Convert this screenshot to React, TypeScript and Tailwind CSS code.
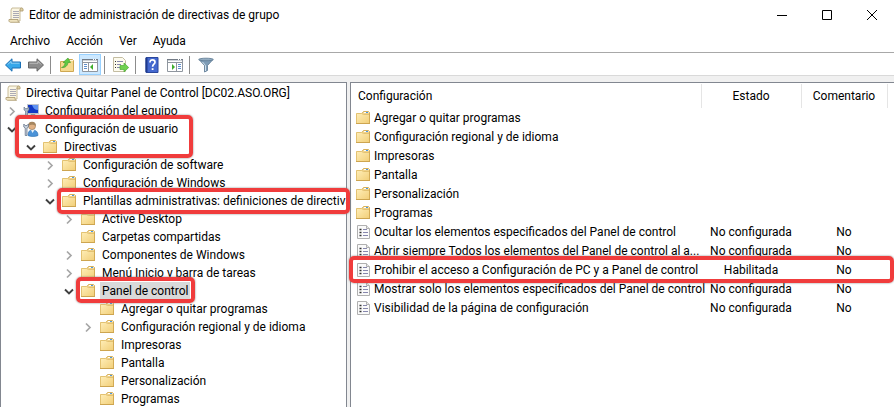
import { useState } from 'react'
import type { ReactNode } from 'react'

type IconProps = { className?: string }

function ScrollIcon({ className = '' }: IconProps) {
  return (
    <svg viewBox="0 0 16 16" className={`h-4 w-4 shrink-0 ${className}`}>
      <path d="M4 1h9.500L12 3v11H3V3z" fill="#fbf6e3" stroke="#c2b48f" strokeWidth=".9" />
      <path d="M12 3.500c0-2 1-2.700 2-2.500s1.300 1.500 1 3h-3z" fill="#e2d3a6" stroke="#a8956a" strokeWidth=".8" />
      <path d="M1 12.500h9c-.3 1.500.3 2.500 1.500 2.800H2.500C1 15 .7 14 1 12.500z" fill="#efe3bf" stroke="#a8956a" strokeWidth=".8" />
      <path d="M5 4.500h6M5 6.500h6M5 8.500h6M5 10.500h6" stroke="#a3a3b0" strokeWidth=".9" />
    </svg>
  )
}

function FolderIcon({ className = '' }: IconProps) {
  return (
    <svg viewBox="0 0 16 16" className={`h-4 w-4 shrink-0 ${className}`}>
      <defs>
        <linearGradient id="folder" x1="0" y1="0" x2="1" y2="1">
          <stop offset="0" stopColor="#ffefba" />
          <stop offset="1" stopColor="#f1cd75" />
        </linearGradient>
      </defs>
      <path d="M7.500 5V2.500l1-1h5l1 1V5z" fill="#f0d28a" stroke="#d6b15c" />
      <path d="M9 2.500h4.500" stroke="#fff" />
      <path d="M11 2.500h2" stroke="#4a98e4" />
      <path d="M1 3h6l1.500 1H15v10H1z" fill="url(#folder)" />
      <path d="M1.500 13V3.500h5.300L8.300 4.500H14" fill="none" stroke="#e3c272" />
      <path d="M14.500 3v11" stroke="#d3ab55" />
      <path d="M1 13.500h14" stroke="#cda550" />
    </svg>
  )
}

function ComputerIcon({ className = '' }: IconProps) {
  return (
    <svg viewBox="0 0 16 16" className={`h-4 w-4 shrink-0 ${className}`}>
      <path d="M4.500 1.500h11v9h-11z" fill="#1238c4" stroke="#c0c4cc" />
      <path d="M9 2h6v5c-3 0-5-2-6-5z" fill="#5f92f2" />
      <path d="M8 11h4l1 2H7z" fill="#9aa0aa" />
      <path d="M5 13.500h10" stroke="#c3c7cf" strokeWidth="1.500" />
      <path d="M1 4v3l1.500 1v6h2V8L6 7V4L4.500 5.500h-2z" fill="#a9b8ca" stroke="#5c6c82" strokeWidth=".6" />
    </svg>
  )
}

function UserIcon({ className = '' }: IconProps) {
  return (
    <svg viewBox="0 0 16 16" className={`h-4 w-4 shrink-0 ${className}`}>
      <path d="M5 14.500c0-4 1.500-5.500 4.500-5.500s5.500 1.500 5.500 5.500c-2 1.300-8 1.300-10 0z" fill="#4b93d8" stroke="#2a6bad" strokeWidth=".6" />
      <path d="M8 9l1.500 3L11.500 9z" fill="#e8f2fb" />
      <circle cx="9" cy="5" r="3.600" fill="#e0b184" stroke="#8d6a46" strokeWidth=".5" />
      <path d="M5.300 5C5 2 7 .6 9.200.8c2.500.1 4 1.700 3.500 4.200C11 4 8 3 5.300 5z" fill="#a58660" />
      <path d="M.8 3v3l1.400 1v7.500h1.800V7l1.400-1V3L4 4.500H2.200z" fill="#c7d0db" stroke="#5c6c82" strokeWidth=".7" />
    </svg>
  )
}

function PolicyIcon({ className = '' }: IconProps) {
  return (
    <svg viewBox="0 0 16 16" className={`h-4 w-4 shrink-0 ${className}`}>
      <path d="M2.500 1.500h9l3 3v10h-12z" fill="#fafafa" stroke="#b0b0b0" />
      <path d="M11.500 1.500v3h3" fill="#e6e6e6" stroke="#b0b0b0" />
      <path d="M4.500 5.500h2M4.500 8.500h2M4.500 11.500h2" stroke="#333" strokeWidth="1.600" />
      <path d="M8 5.500h4M8 8.500h5M8 11.500h5" stroke="#8787ad" />
    </svg>
  )
}

function ArrowIcon({ color, edge, flip }: { color: string; edge: string; flip?: boolean }) {
  return (
    <svg viewBox="0 0 16 16" className={`h-4 w-4 ${flip ? '-scale-x-100' : ''}`}>
      <path d="M.5 8L7 1.800V5h8.500v6H7v3.200z" fill={color} stroke={edge} strokeLinejoin="round" />
      <path d="M2.800 7.500L6 4.300V6.200h8.500" fill="none" stroke="#fff" strokeOpacity=".45" />
    </svg>
  )
}

function FolderUpIcon() {
  return (
    <svg viewBox="0 0 16 16" className="h-4 w-4">
      <path d="M1.500 4.500h6l1-2h5l1 1v11h-13z" fill="#f5d98f" stroke="#cfa852" />
      <path d="M10 3.500h4" stroke="#fff6d8" />
      <path d="M2.500 10.500C5 9.500 6 8 6 5.500H4L9 1l2.500 4.500H9c-.3 3-2.500 5.500-6.500 5z" fill="#5fc944" stroke="#3a9a29" strokeWidth=".6" />
    </svg>
  )
}

function WindowIcon({ side }: { side: 'left' | 'right' }) {
  return (
    <svg viewBox="0 0 16 16" className="h-4 w-4">
      <path d="M.5 2.500h15v12H.5z" fill="#fff" stroke="#8f969f" />
      <path d="M0 2.500h16" stroke="#737b86" />
      <path d="M1 3.500h14" stroke="#cdd2d8" />
      <path d="M11 2.500h1M13 2.500h1" stroke="#fff" />
      <path d="M1 5.500h14" stroke="#8f969f" />
      {side === 'left' ? (
        <>
          <path d="M6.500 6v8" stroke="#8f969f" />
          <path d="M2 7.500h3M2 9.500h3M2 11.500h3" stroke="#5f8fcd" />
          <path d="M11 7v6L8 10z" fill="#3eae2b" />
        </>
      ) : (
        <>
          <path d="M9.500 6v8" stroke="#8f969f" />
          <path d="M11 7.500h3M11 9.500h3M11 11.500h3" stroke="#5f8fcd" />
          <path d="M5 7v6l3-3z" fill="#3eae2b" />
        </>
      )}
    </svg>
  )
}

function ExportIcon() {
  return (
    <svg viewBox="0 0 16 16" className="h-4 w-4">
      <path d="M.5.500h9l3 3v11H.5z" fill="#fdfbee" stroke="#c4bda2" />
      <path d="M2 4.500h1M2 7.500h1M2 10.500h1" stroke="#333" />
      <path d="M4 4.500h6M4 7.500h4M4 10.500h3" stroke="#8787ad" />
      <path d="M7 8.500h4V6l4.700 4.500L11 15v-2.500H7z" fill="#6fd150" stroke="#4fae38" strokeWidth=".7" />
    </svg>
  )
}

function HelpIcon() {
  return (
    <svg viewBox="0 0 16 16" className="h-4 w-4">
      <path d="M2 .5h12v15H2z" fill="#4468cf" stroke="#2a479c" />
      <path d="M2.500 1v14" stroke="#1f3a8c" strokeWidth="2" />
      <path d="M6 5.500c0-2 1.200-2.700 2.500-2.700s2.500.9 2.500 2.400C11 7.200 8.600 7.300 8.600 9.700" fill="none" stroke="#fff" strokeWidth="1.700" />
      <path d="M7.700 11.200h1.800V13H7.700z" fill="#fff" />
    </svg>
  )
}

function FilterIcon() {
  return (
    <svg viewBox="0 0 16 16" className="h-4 w-4">
      <path d="M1 2.500l5.500 6v6.500l3-1.500v-5l5.500-6z" fill="#7f9db7" stroke="#5d7a93" strokeWidth=".8" />
      <path d="M4.500 5l3 3.500v5.500" fill="none" stroke="#d3e2ed" />
      <ellipse cx="8" cy="2.500" rx="7.300" ry="1.300" fill="#93acc1" stroke="#5d7a93" strokeWidth=".8" />
    </svg>
  )
}

function Chevron({ open }: { open: boolean }) {
  return (
    <svg viewBox="0 0 12 12" className="h-3 w-3" fill="none">
      {open ? (
        <path d="M2 4.500l4 4 4-4" stroke="#404040" strokeWidth="1.900" />
      ) : (
        <path d="M4 2.500l4 4-4 4" stroke="#a6a6a6" strokeWidth="1.700" />
      )}
    </svg>
  )
}

type TreeItem = {
  label: string
  level: string
  state?: 'open' | 'closed'
  icon?: ReactNode
}

const tree: TreeItem[] = [
  { label: 'Configuración del equipo', level: 'pl-[5px]', state: 'closed', icon: <ComputerIcon /> },
  { label: 'Configuración de usuario', level: 'pl-[5px]', state: 'open', icon: <UserIcon /> },
  { label: 'Directivas', level: 'pl-6', state: 'open' },
  { label: 'Configuración de software', level: 'pl-[43px]', state: 'closed' },
  { label: 'Configuración de Windows', level: 'pl-[43px]', state: 'closed' },
  { label: 'Plantillas administrativas: definiciones de directiva', level: 'pl-[43px]', state: 'open' },
  { label: 'Active Desktop', level: 'pl-[62px]', state: 'closed' },
  { label: 'Carpetas compartidas', level: 'pl-[62px]' },
  { label: 'Componentes de Windows', level: 'pl-[62px]', state: 'closed' },
  { label: 'Menú Inicio y barra de tareas', level: 'pl-[62px]', state: 'closed' },
  { label: 'Panel de control', level: 'pl-[62px]', state: 'open' },
  { label: 'Agregar o quitar programas', level: 'pl-[81px]' },
  { label: 'Configuración regional y de idioma', level: 'pl-[81px]', state: 'closed' },
  { label: 'Impresoras', level: 'pl-[81px]' },
  { label: 'Pantalla', level: 'pl-[81px]' },
  { label: 'Personalización', level: 'pl-[81px]' },
  { label: 'Programas', level: 'pl-[81px]' },
]

const folders = [
  'Agregar o quitar programas',
  'Configuración regional y de idioma',
  'Impresoras',
  'Pantalla',
  'Personalización',
  'Programas',
]

const policies = [
  { name: 'Ocultar los elementos especificados del Panel de control', status: 'No configurada' },
  { name: 'Abrir siempre Todos los elementos del Panel de control al a...', status: 'No configurada' },
  { name: 'Prohibir el acceso a Configuración de PC y a Panel de control', status: 'Habilitada' },
  { name: 'Mostrar solo los elementos especificados del Panel de control', status: 'No configurada' },
  { name: 'Visibilidad de la página de configuración', status: 'No configurada' },
]

function ToolButton({ label, active, children }: { label: string; active?: boolean; children: ReactNode }) {
  return (
    <button
      aria-label={label}
      className={`flex h-[21px] w-[22px] items-center justify-center border ${
        active ? 'border-[#99d1ff] bg-[#cce8ff]' : 'border-transparent hover:bg-[#e5f3ff]'
      }`}
    >
      {children}
    </button>
  )
}

function Separator() {
  return <div className="mr-1 mb-px ml-[2px] h-[18px] w-px bg-[#8c8c8c]" />
}

function Mark({ className }: { className: string }) {
  return (
    <div
      className={`pointer-events-none absolute rounded-[5px] border-4 border-[#f03c3c] shadow-[0_0_2px_#777] ${className}`}
    />
  )
}

function TreePane() {
  const [selected, setSelected] = useState('Panel de control')

  return (
    <nav className="w-[347px] shrink-0 overflow-hidden border border-b-0 border-[#828790] bg-white pt-px">
      <div className="flex h-[18px] items-center gap-[5px] pl-1">
        <ScrollIcon />
        <span className="whitespace-nowrap">Directiva Quitar Panel de Control [DC02.ASO.ORG]</span>
      </div>
      <ul>
        {tree.map((item) => (
          <li key={item.label} className={`flex h-[18px] items-center ${item.level}`}>
            <span className="flex w-[17px] shrink-0">
              {item.state && (
                <button aria-label={item.label}>
                  <Chevron open={item.state === 'open'} />
                </button>
              )}
            </span>
            {item.icon || <FolderIcon />}
            <button
              onClick={() => setSelected(item.label)}
              className={`ml-1 h-[18px] px-[2px] whitespace-nowrap ${
                selected === item.label ? 'bg-[#d9d9d9]' : ''
              }`}
            >
              {item.label}
            </button>
          </li>
        ))}
      </ul>
    </nav>
  )
}

function ListPane() {
  return (
    <section className="min-w-0 flex-1 border-t border-l border-[#828790] bg-white pt-px">
      <table className="w-full table-fixed border-collapse">
        <thead>
          <tr className="h-6">
            <th className="border-r border-[#e5e5e5] pl-[7px] text-left font-normal">Configuración</th>
            <th className="w-[100px] border-r border-[#e5e5e5] font-normal">Estado</th>
            <th className="w-[86px] border-r border-[#e5e5e5] font-normal">Comentario</th>
            <th className="w-[7px]" />
          </tr>
        </thead>
        <tbody>
          {folders.map((name) => (
            <tr key={name} className="h-[19px]">
              <td className="p-0 pl-1">
                <div className="flex items-center gap-[3px] whitespace-nowrap">
                  <FolderIcon />
                  {name}
                </div>
              </td>
              <td />
              <td />
              <td />
            </tr>
          ))}
          {policies.map((policy) => (
            <tr key={policy.name} className="h-[19px]">
              <td className="p-0 pl-1">
                <div className="flex items-center gap-[3px] whitespace-nowrap">
                  <PolicyIcon />
                  {policy.name}
                </div>
              </td>
              <td className="p-0 text-center whitespace-nowrap">{policy.status}</td>
              <td className="p-0 text-center">No</td>
              <td />
            </tr>
          ))}
        </tbody>
      </table>
    </section>
  )
}

function App() {
  return (
    <div className="flex h-screen flex-col overflow-hidden bg-white font-['Roboto','Open_Sans',sans-serif] text-[12px] leading-[18px] text-black">
      {/* Title bar */}
      <header className="flex h-[30px] shrink-0 items-center pl-2">
        <ScrollIcon />
        <h1 className="ml-[5px] flex-1">Editor de administración de directivas de grupo</h1>
        <button aria-label="Minimizar" className="flex h-full w-[45px] items-center justify-center">
          <svg viewBox="0 0 10 10" className="h-[10px] w-[10px]" stroke="#000">
            <path d="M0 5.500h10" />
          </svg>
        </button>
        <button aria-label="Maximizar" className="flex h-full w-[45px] items-center justify-center">
          <svg viewBox="0 0 10 10" className="h-[10px] w-[10px]" fill="none" stroke="#000">
            <path d="M.5.500h9v9h-9z" />
          </svg>
        </button>
        <button aria-label="Cerrar" className="flex h-full w-[45px] items-center justify-center">
          <svg viewBox="0 0 10 10" className="h-[10px] w-[10px]" stroke="#000">
            <path d="M0 0l10 10M10 0L0 10" />
          </svg>
        </button>
      </header>

      {/* Menu */}
      <div className="flex h-[23px] shrink-0 items-center gap-4 border-b border-[#a8a8a8] pl-[10px]">
        <button>Archivo</button>
        <button>Acción</button>
        <button>Ver</button>
        <button>Ayuda</button>
      </div>

      {/* Toolbar */}
      <div className="flex h-[23px] shrink-0 items-end gap-px border-b border-[#d9d9d9] pl-[2px]">
        <ToolButton label="Atrás">
          <ArrowIcon color="#35a7ea" edge="#1a6fb4" />
        </ToolButton>
        <ToolButton label="Adelante">
          <ArrowIcon color="#8c8c8c" edge="#666" flip />
        </ToolButton>
        <Separator />
        <ToolButton label="Subir un nivel">
          <FolderUpIcon />
        </ToolButton>
        <ToolButton label="Mostrar el árbol de consola" active>
          <WindowIcon side="left" />
        </ToolButton>
        <Separator />
        <ToolButton label="Exportar lista">
          <ExportIcon />
        </ToolButton>
        <Separator />
        <ToolButton label="Ayuda">
          <HelpIcon />
        </ToolButton>
        <ToolButton label="Mostrar el panel de acciones">
          <WindowIcon side="right" />
        </ToolButton>
        <Separator />
        <ToolButton label="Filtro">
          <FilterIcon />
        </ToolButton>
      </div>

      {/* Panes */}
      <main className="relative flex min-h-0 flex-1 gap-[3px] bg-[#f0f0f0] pt-[6px]">
        <TreePane />
        <ListPane />
        <Mark className="top-[39px] left-[15px] h-[43px] w-[178px]" />
        <Mark className="top-[112px] left-[57px] h-[26px] w-[293px]" />
        <Mark className="top-[201px] left-[76px] h-[26px] w-[119px]" />
        <Mark className="top-[180px] right-0 left-[349px] h-[27px]" />
      </main>
    </div>
  )
}

export default App
